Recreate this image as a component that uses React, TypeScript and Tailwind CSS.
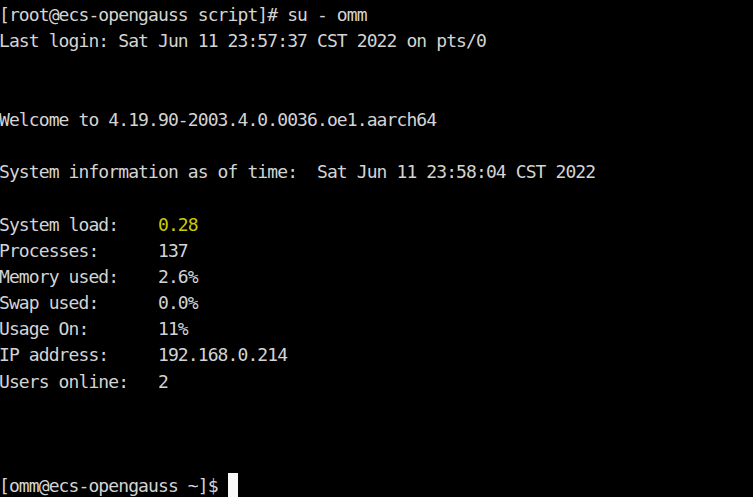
import React from "react";

const lines: React.ReactNode[] = [
  "[root@ecs-opengauss script]# su - omm",
  "Last login: Sat Jun 11 23:57:37 CST 2022 on pts/0",
  "",
  "",
  "Welcome to 4.19.90-2003.4.0.0036.oe1.aarch64",
  "",
  "System information as of time:  Sat Jun 11 23:58:04 CST 2022",
  "",
  <>
    {"System load:    "}
    <span className="text-[#cccc00]">0.28</span>
  </>,
  "Processes:      137",
  "Memory used:    2.6%",
  "Swap used:      0.0%",
  "Usage On:       11%",
  "IP address:     192.168.0.214",
  "Users online:   2",
  "",
  "",
  "",
  <>
    {"[omm@ecs-opengauss ~]$ "}
    <span className="inline-block h-[25px] w-[10px] bg-[#f8f8f8] align-top" />
  </>,
];

export default function App() {
  return (
    <div className="h-[497px] w-[753px] overflow-hidden bg-black pt-[2px]">
      <div
        className="-ml-[1px] whitespace-pre text-[18px] leading-[26.2px] tracking-[-0.9px] text-[#d4d4d4]"
        style={{ fontFamily: '"DejaVu Sans Mono", "Liberation Mono", monospace' }}
      >
        {lines.map((l, i) => (
          <div key={i} className="h-[26.2px]">
            {l === "" ? "\u00a0" : l}
          </div>
        ))}
      </div>
    </div>
  );
}
